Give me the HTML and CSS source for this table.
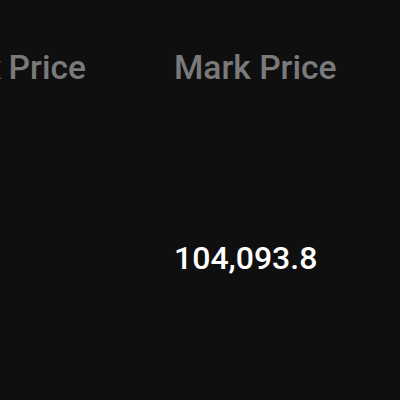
FILE: index.html
```
<!DOCTYPE html>
<html>
<head>
<meta charset="utf-8">
<link rel="stylesheet" href="styles.css">
</head>
<body>
<div class="table">
  <div class="row head">
    <div class="cell first">Index Price</div>
    <div class="cell">Mark Price</div>
  </div>
  <div class="row body">
    <div class="cell first"></div>
    <div class="cell value">104,093.8</div>
  </div>
</div>
</body>
</html>
```
FILE: styles.css
```
html, body {
  margin: 0;
  padding: 0;
  background: #0f0f0f;
  width: 400px;
  height: 400px;
  overflow: hidden;
}
.table {
  font-family: Roboto, "Noto Sans", sans-serif;
  padding-top: 48px;
}
.row {
  display: flex;
  gap: 88px;
  white-space: nowrap;
}
.cell {
  display: flex;
}
.first {
  width: 86px;
  justify-content: flex-end;
  word-spacing: -1px;
}
.head {
  font-size: 33.6px;
  line-height: 40px;
  font-weight: 500;
  color: #7a7a7a;
}
.body {
  margin-top: 150px;
  font-size: 32px;
  line-height: 40px;
  font-weight: 500;
  color: #ffffff;
}
```
